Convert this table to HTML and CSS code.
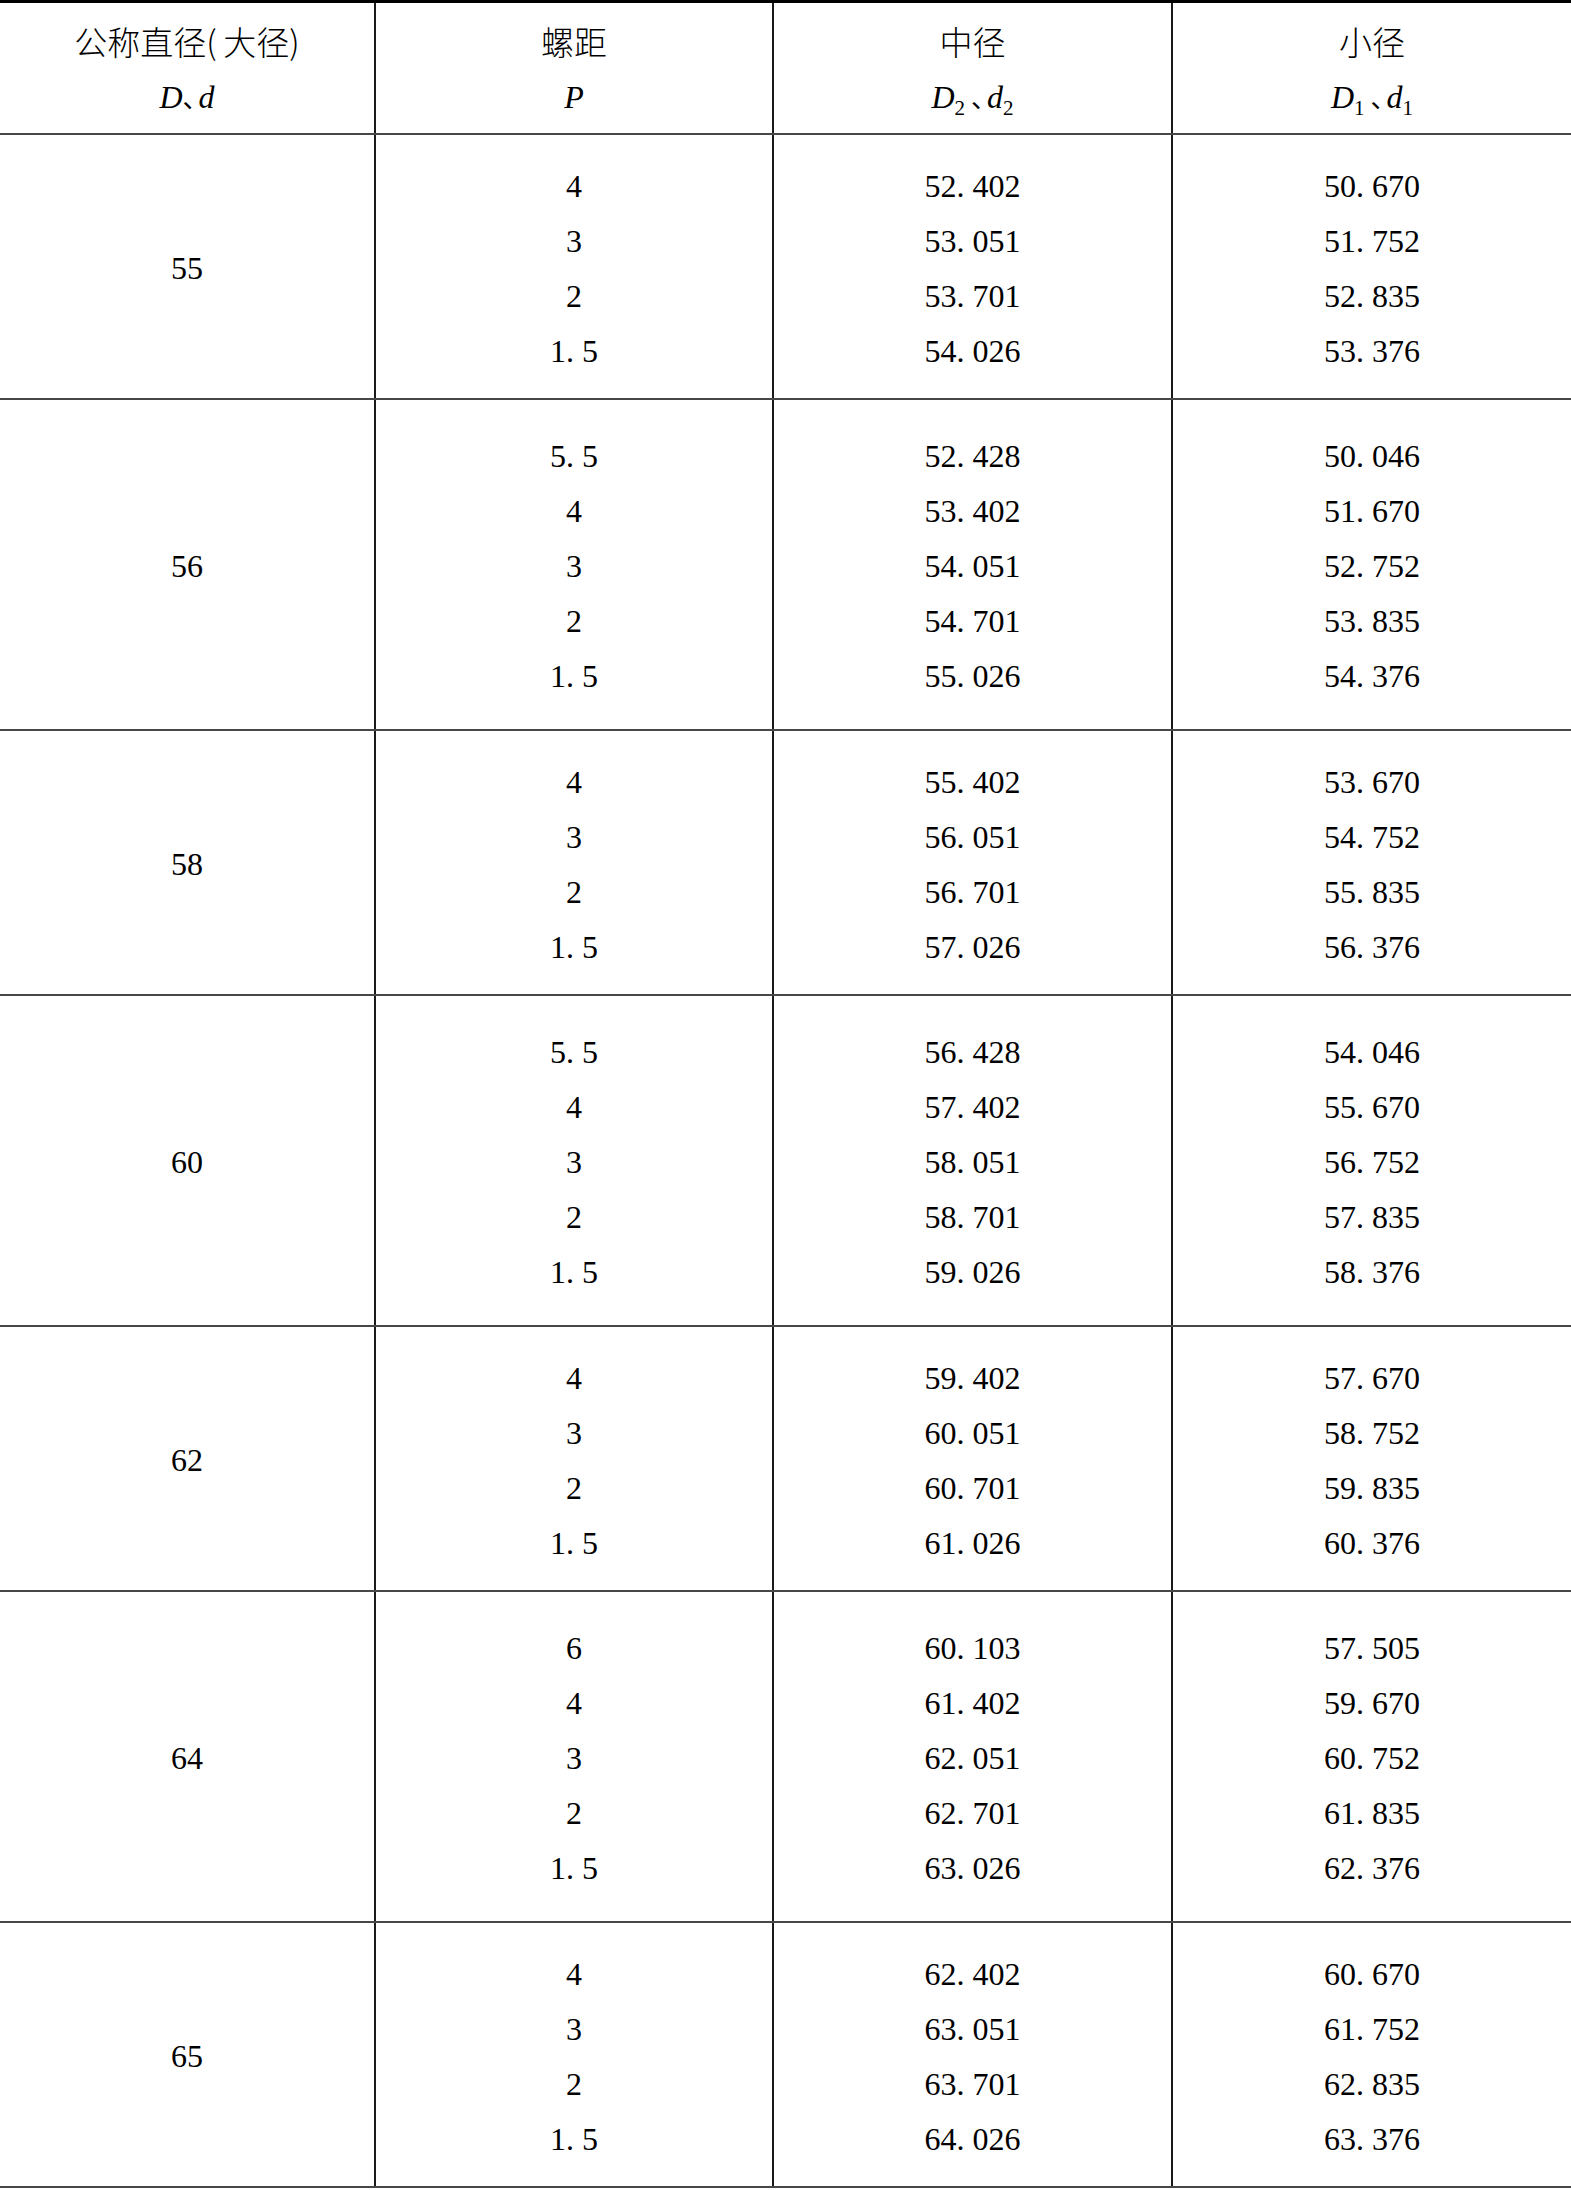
FILE: index.html
```html
<!DOCTYPE html>
<html lang="zh-CN">
<head>
<meta charset="utf-8">
<title>普通螺纹基本尺寸</title>
<link rel="stylesheet" href="styles.css">
</head>
<body>
<div class="table">
  <div class="row head">
    <div class="cell"><span class="cjk">公称直径(&thinsp;大径)</span><span class="sym"><i>D</i><span class="sep">、</span><i>d</i></span></div>
    <div class="cell"><span class="cjk">螺距</span><span class="sym"><i>P</i></span></div>
    <div class="cell"><span class="cjk">中径</span><span class="sym"><i>D</i><sub>2</sub><span class="sep sp">、</span><i>d</i><sub>2</sub></span></div>
    <div class="cell"><span class="cjk">小径</span><span class="sym"><i>D</i><sub>1</sub><span class="sep sp">、</span><i>d</i><sub>1</sub></span></div>
  </div>

  <div class="row g4">
    <div class="cell"><span>55</span></div>
    <div class="cell"><span>4</span><span>3</span><span>2</span><span>1. 5</span></div>
    <div class="cell"><span>52. 402</span><span>53. 051</span><span>53. 701</span><span>54. 026</span></div>
    <div class="cell"><span>50. 670</span><span>51. 752</span><span>52. 835</span><span>53. 376</span></div>
  </div>

  <div class="row g5">
    <div class="cell"><span>56</span></div>
    <div class="cell"><span>5. 5</span><span>4</span><span>3</span><span>2</span><span>1. 5</span></div>
    <div class="cell"><span>52. 428</span><span>53. 402</span><span>54. 051</span><span>54. 701</span><span>55. 026</span></div>
    <div class="cell"><span>50. 046</span><span>51. 670</span><span>52. 752</span><span>53. 835</span><span>54. 376</span></div>
  </div>

  <div class="row g4">
    <div class="cell"><span>58</span></div>
    <div class="cell"><span>4</span><span>3</span><span>2</span><span>1. 5</span></div>
    <div class="cell"><span>55. 402</span><span>56. 051</span><span>56. 701</span><span>57. 026</span></div>
    <div class="cell"><span>53. 670</span><span>54. 752</span><span>55. 835</span><span>56. 376</span></div>
  </div>

  <div class="row g5">
    <div class="cell"><span>60</span></div>
    <div class="cell"><span>5. 5</span><span>4</span><span>3</span><span>2</span><span>1. 5</span></div>
    <div class="cell"><span>56. 428</span><span>57. 402</span><span>58. 051</span><span>58. 701</span><span>59. 026</span></div>
    <div class="cell"><span>54. 046</span><span>55. 670</span><span>56. 752</span><span>57. 835</span><span>58. 376</span></div>
  </div>

  <div class="row g4">
    <div class="cell"><span>62</span></div>
    <div class="cell"><span>4</span><span>3</span><span>2</span><span>1. 5</span></div>
    <div class="cell"><span>59. 402</span><span>60. 051</span><span>60. 701</span><span>61. 026</span></div>
    <div class="cell"><span>57. 670</span><span>58. 752</span><span>59. 835</span><span>60. 376</span></div>
  </div>

  <div class="row g5">
    <div class="cell"><span>64</span></div>
    <div class="cell"><span>6</span><span>4</span><span>3</span><span>2</span><span>1. 5</span></div>
    <div class="cell"><span>60. 103</span><span>61. 402</span><span>62. 051</span><span>62. 701</span><span>63. 026</span></div>
    <div class="cell"><span>57. 505</span><span>59. 670</span><span>60. 752</span><span>61. 835</span><span>62. 376</span></div>
  </div>

  <div class="row g4">
    <div class="cell"><span>65</span></div>
    <div class="cell"><span>4</span><span>3</span><span>2</span><span>1. 5</span></div>
    <div class="cell"><span>62. 402</span><span>63. 051</span><span>63. 701</span><span>64. 026</span></div>
    <div class="cell"><span>60. 670</span><span>61. 752</span><span>62. 835</span><span>63. 376</span></div>
  </div>
</div>
</body>
</html>
```

FILE: styles.css
```css
html, body {
  margin: 0;
  padding: 0;
  background: #fff;
}

body {
  font-family: "Liberation Serif", "Noto Sans CJK SC", serif;
  color: #000;
}

.table {
  width: 1571px;
  border-top: 3px solid #000;
}

.row {
  display: grid;
  grid-template-columns: 374px 398px 399px 400px;
  border-bottom: 2px solid #474747;
}

.cell {
  display: flex;
  flex-direction: column;
  justify-content: center;
  align-items: center;
  font-size: 32px;
  line-height: 55px;
  white-space: pre;
}

.cell + .cell {
  border-left: 2px solid #1a1a1a;
}

.head {
  height: 130px;
}

.head .cell {
  line-height: 56px;
  padding-top: 2px;
  box-sizing: border-box;
}

.g4 {
  height: 263px;
}

.g5 {
  height: 329px;
}

.g4 .cell,
.g5 .cell {
  padding-top: 4px;
  box-sizing: border-box;
}

.cjk {
  font-family: "Noto Sans CJK SC", sans-serif;
  font-size: 33px;
  font-weight: 300;
}

.sym {
  font-family: "Liberation Serif", serif;
  font-size: 32px;
}

.sym i {
  font-style: italic;
}

.sym sub {
  font-size: 21px;
  vertical-align: -7px;
  line-height: 0;
}

.sep {
  font-family: "Noto Sans CJK SC", sans-serif;
  font-style: normal;
  font-size: 26px;
  letter-spacing: -10px;
}

.sep.sp {
  margin-left: 6px;
}
```
